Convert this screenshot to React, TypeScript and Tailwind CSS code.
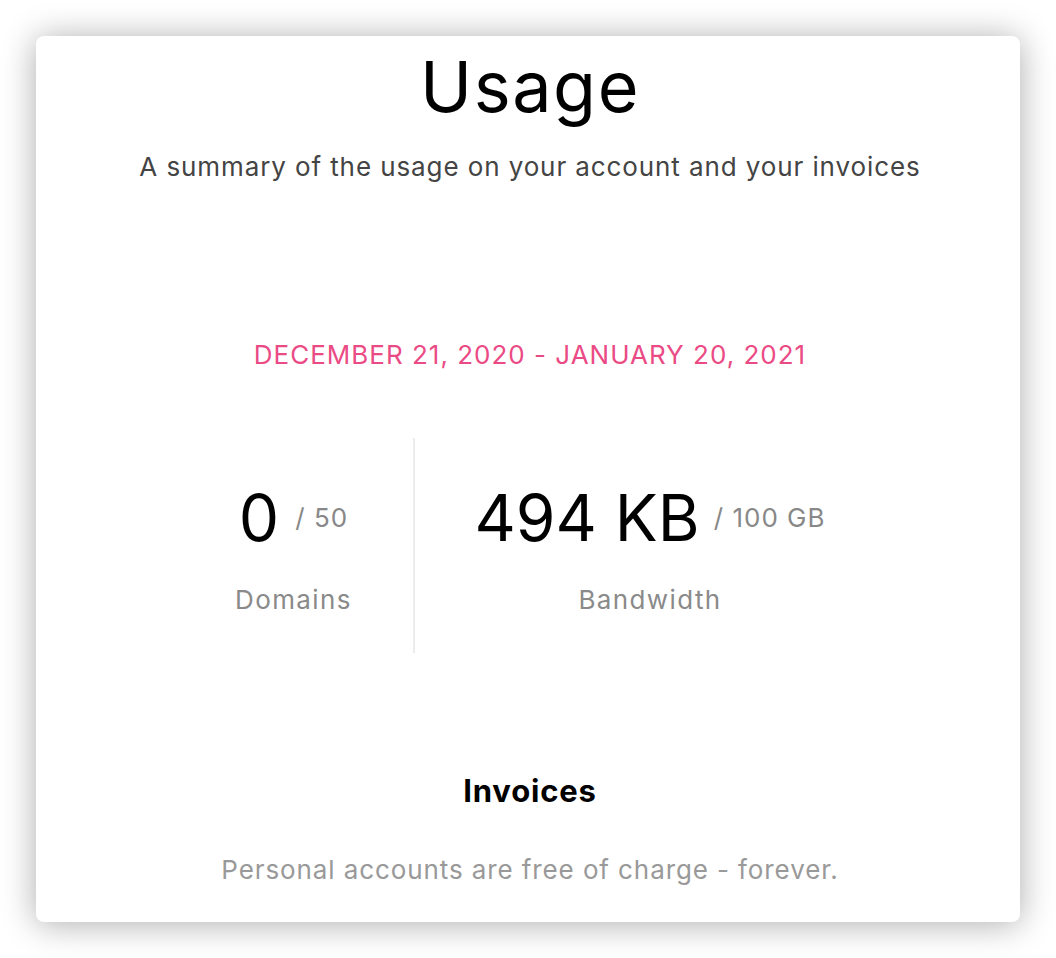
import React from "react";

export default function App() {
  const font = { fontFamily: "Inter, 'Noto Sans', sans-serif" };
  return (
    <div className="min-h-[958px] w-[1056px] bg-white p-[36px]" style={font}>
      <div className="flex h-[886px] w-[984px] flex-col items-center rounded-lg bg-white pt-[16px] pl-[4px] shadow-[0_2px_34px_rgba(0,0,0,0.33)]">
        <h1 className="text-[70px] leading-none font-normal tracking-[1.6px] text-black">Usage</h1>
        <p className="mt-[25px] text-[26px] leading-[39px] tracking-[0.9px] text-[#444]">
          A summary of the usage on your account and your invoices
        </p>
        <p className="mt-[149px] text-[26px] leading-[39px] tracking-[1px] text-[#eb4b85]">
          DECEMBER 21, 2020 - JANUARY 20, 2021
        </p>
        <div className="mt-[64px] flex">
          <div className="flex w-[238px] flex-col items-center pt-[48px] pb-[34px]">
            <div className="flex items-center">
              <span className="text-[64px] leading-none text-black">0</span>
              <span className="ml-[16px] text-[26px] leading-none tracking-[1px] text-[#888]">/ 50</span>
            </div>
            <span className="mt-[30px] text-[26px] leading-[39px] tracking-[1.4px] text-[#8a8a8a]">Domains</span>
          </div>
          <div className="flex w-[473px] flex-col items-center border-l-2 border-[#ececec] pt-[48px] pb-[34px]">
            <div className="flex items-center">
              <span className="text-[64px] leading-none text-black">494 KB</span>
              <span className="ml-[14px] text-[26px] leading-none tracking-[1px] text-[#888]">/ 100 GB</span>
            </div>
            <span className="mt-[30px] text-[26px] leading-[39px] tracking-[1.4px] text-[#8a8a8a]">Bandwidth</span>
          </div>
        </div>
        <h2 className="mt-[115px] text-[31px] leading-[45px] font-bold tracking-[0.8px] text-black">Invoices</h2>
        <p className="mt-[37px] text-[26px] leading-[39px] tracking-[0.9px] text-[#999]">
          Personal accounts are free of charge - forever.
        </p>
      </div>
    </div>
  );
}
